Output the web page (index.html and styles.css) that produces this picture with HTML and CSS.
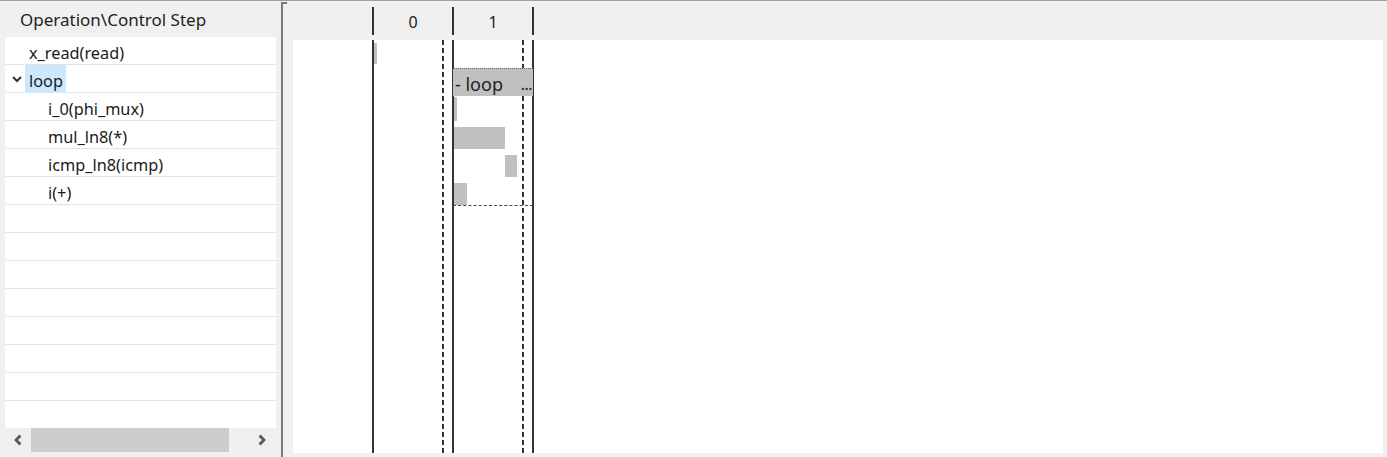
FILE: index.html
```html
<!DOCTYPE html>
<html>
<head>
<meta charset="utf-8">
<link rel="stylesheet" href="styles.css">
</head>
<body>
<div class="app">
  <div class="left">
    <div class="left-head">Operation\Control Step</div>
    <div class="tree">
      <div class="row"><span class="lbl l1">x_read(read)</span></div>
      <div class="row"><svg class="chev" width="10" height="7" viewBox="0 0 10 7"><polyline points="1,1 5,5 9,1" fill="none" stroke="#333" stroke-width="2"/></svg><span class="lbl sel">loop</span></div>
      <div class="row"><span class="lbl l2">i_0(phi_mux)</span></div>
      <div class="row"><span class="lbl l2">mul_ln8(*)</span></div>
      <div class="row"><span class="lbl l2">icmp_ln8(icmp)</span></div>
      <div class="row"><span class="lbl l2">i(+)</span></div>
      <div class="row"></div>
      <div class="row"></div>
      <div class="row"></div>
      <div class="row"></div>
      <div class="row"></div>
      <div class="row"></div>
      <div class="row"></div>
      <div class="row"></div>
    </div>
    <div class="hscroll">
      <svg class="arrow" width="10" height="12" viewBox="0 0 10 12"><polyline points="7.5,1.5 3,6 7.5,10.5" fill="none" stroke="#555" stroke-width="2.8"/></svg>
      <div class="thumb"></div>
      <svg class="arrow" width="10" height="12" viewBox="0 0 10 12"><polyline points="2.5,1.5 7,6 2.5,10.5" fill="none" stroke="#555" stroke-width="2.8"/></svg>
    </div>
  </div>
  <div class="splitter"></div>
  <div class="right">
    <div class="chart-head">
      <div class="lead"></div>
      <div class="hcol">0</div>
      <div class="hcol">1</div>
      <div class="hend"></div>
    </div>
    <div class="chart-body">
      <div class="lead"></div>
      <div class="step"><div class="main"></div><div class="dash"></div><div class="pad"></div></div>
      <div class="step"><div class="main"></div><div class="dash"></div><div class="pad"></div></div>
      <div class="end"></div>
      <div class="bar" style="left:81px;top:3px;width:3px;height:21px"></div>
      <div class="loop" style="left:160px;top:28px;width:80px;height:138px">
        <div class="loop-head"><span>- loop</span><span class="dots">...</span></div>
      </div>
      <div class="bar" style="left:161px;top:57px;width:3px;height:24px"></div>
      <div class="bar" style="left:161px;top:87px;width:51px;height:22px"></div>
      <div class="bar" style="left:212px;top:115px;width:12px;height:22px"></div>
      <div class="bar" style="left:161px;top:143px;width:13px;height:22px"></div>
    </div>
  </div>
</div>
</body>
</html>
```
FILE: styles.css
```css
html, body {
  margin: 0;
  padding: 0;
}
body {
  background: #f0f0f0;
  font-family: "Noto Sans", "Open Sans", sans-serif;
  color: #1a1a1a;
  width: 1387px;
  height: 457px;
  overflow: hidden;
}
.app {
  display: flex;
  height: 456px;
  border-top: 1px solid #a0a0a0;
}
.left {
  width: 281px;
  display: flex;
  flex-direction: column;
}
.left-head {
  height: 36px;
  line-height: 38px;
  padding-left: 20px;
  font-size: 17px;
  color: #1e1e1e;
}
.tree {
  margin-left: 5px;
  width: 271px;
  height: 391px;
  background: #fff;
  overflow: hidden;
}
.row {
  height: 27px;
  border-bottom: 1px solid #e3e3e3;
  display: flex;
  align-items: center;
  font-size: 16.3px;
}
.lbl {
  line-height: 27px;
  padding-top: 3px;
  height: 25px;
  box-sizing: content-box;
}
.l1 { padding-left: 24px; }
.l2 { padding-left: 43px; }
.chev {
  margin-left: 7px;
  margin-right: 3px;
  margin-top: 2px;
}
.sel {
  background: #cce8ff;
  padding: 3px 3px 0 4px;
  height: 25px;
  line-height: 27px;
}
.hscroll {
  height: 24px;
  display: flex;
  align-items: center;
  margin-left: 5px;
  width: 271px;
}
.hscroll .arrow:first-child {
  margin-left: 8px;
}
.thumb {
  margin-left: 8px;
  width: 198px;
  height: 24px;
  background: #cdcdcd;
}
.hscroll .arrow:last-child {
  margin-left: 28px;
}
.splitter {
  width: 2px;
  margin-top: 1px;
  background: #7a7a7a;
  position: relative;
}
.splitter::before {
  content: "";
  position: absolute;
  left: 0;
  top: 0;
  width: 6px;
  height: 2px;
  background: #7a7a7a;
}
.right {
  flex: 1;
  display: flex;
  flex-direction: column;
  padding-left: 10px;
  padding-right: 4px;
}
.chart-head {
  height: 39px;
  display: flex;
}
.chart-head .lead {
  width: 79px;
}
.hcol {
  width: 78px;
  border-left: 2px solid #333;
  margin: 6px 0 5px 0;
  text-align: center;
  font-size: 16px;
  line-height: 30px;
  color: #222;
}
.hend {
  margin: 6px 0 5px 0;
  border-left: 2px solid #333;
  flex: 1;
}
.chart-body {
  flex: 1;
  margin-bottom: 4px;
  background: #fff;
  display: flex;
  position: relative;
}
.chart-body .lead { width: 79px; }
.step {
  width: 78px;
  border-left: 2px solid #333;
  display: flex;
}
.step .main { width: 68px; }
.step .dash {
  width: 2px;
  background: repeating-linear-gradient(to bottom, #333 0 5px, transparent 5px 8px);
}
.step .pad { width: 8px; }
.end {
  flex: 1;
  border-left: 2px solid #333;
}
.bar {
  position: absolute;
  background: #c0c0c0;
}
.loop {
  position: absolute;
  box-sizing: border-box;
  border: 1px dashed #444;
  border-left: none;
  border-right: none;
}
.loop-head {
  height: 28px;
  background: #c0c0c0;
  display: flex;
  align-items: center;
  justify-content: space-between;
  padding: 2px 1px 0 2px;
  box-sizing: border-box;
  font-size: 18px;
  color: #1e1e1e;
  border-top: 1px dotted #666;
  margin-top: -1px;
}
.loop-head .dots {
  font-size: 16px;
  letter-spacing: -0.5px;
}
```
